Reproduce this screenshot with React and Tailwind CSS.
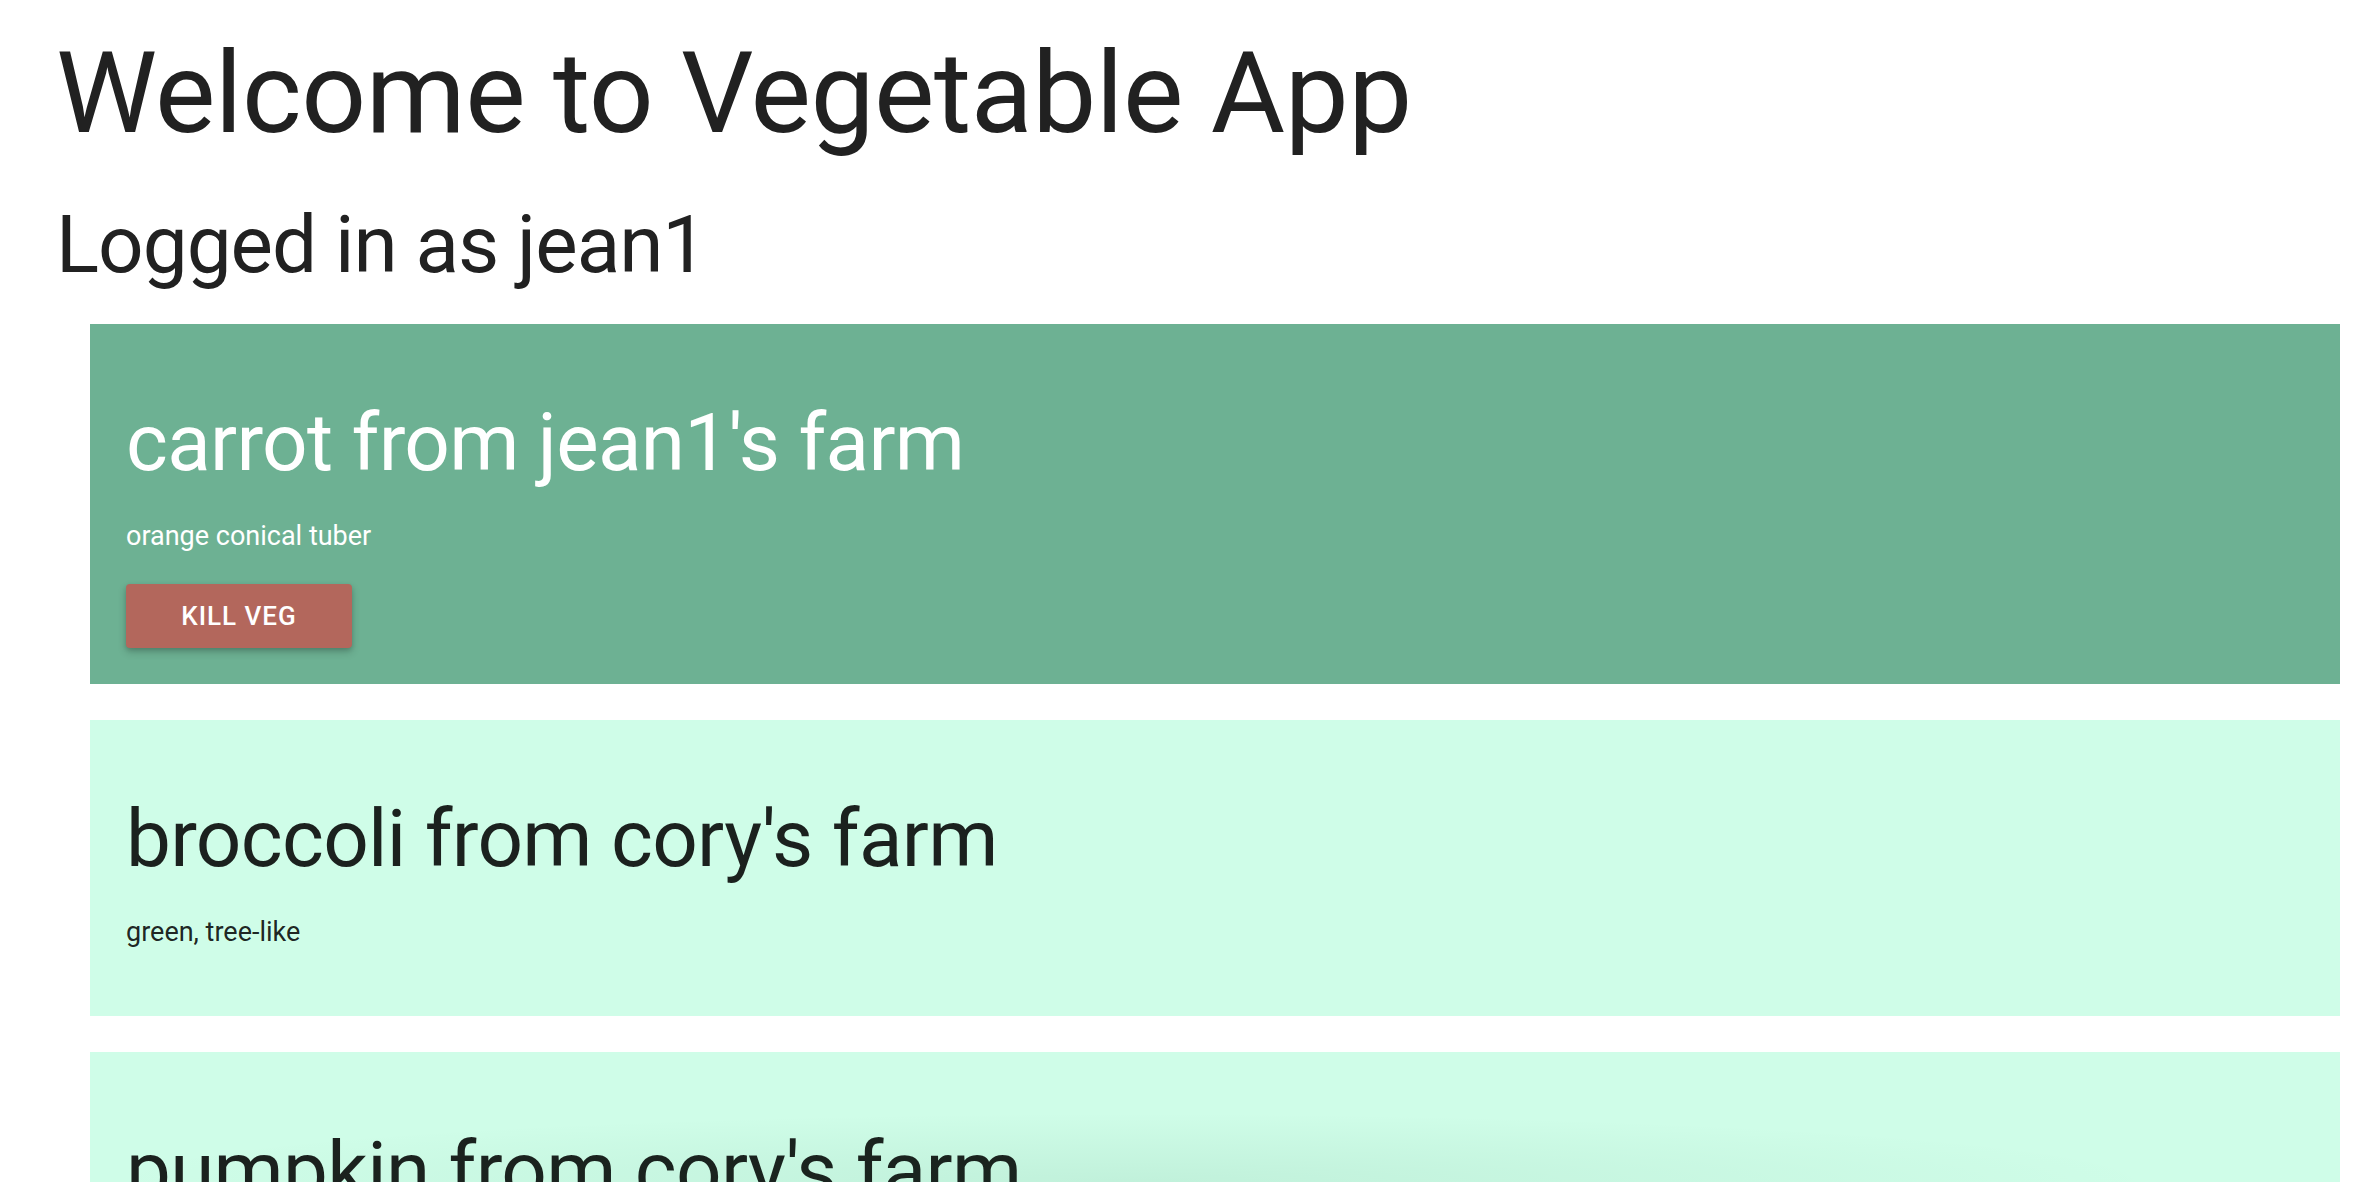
import React from 'react';

const vegetables = [
    { id: 1, name: 'carrot', farmer: 'jean1', description: 'orange conical tuber', mine: true },
    { id: 2, name: 'broccoli', farmer: 'cory', description: 'green, tree-like', mine: false },
    { id: 3, name: 'pumpkin', farmer: 'cory', description: 'big orange gourd', mine: false },
];

function VegCard({ veg }) {
    return (
        <div
            className={`mt-[36px] px-[36px] pt-[79px] pb-[36px] ${
                veg.mine ? 'bg-[#6db193] text-white' : 'bg-[#cffde8] text-[rgba(0,0,0,0.87)]'
            }`}
        >
            <h3 className="text-[80px] leading-none font-normal tracking-[-0.7px]">
                {veg.name} from {veg.farmer}'s farm
            </h3>
            <p className="mt-[40px] mb-[34px] text-[27px] leading-none">{veg.description}</p>
            {veg.mine && (
                <button className="h-[64px] w-[226px] rounded-[4px] bg-[#b3675c] text-[26px] font-medium tracking-[1px] text-white shadow-[0_4px_8px_rgba(0,0,0,0.2),0_2px_4px_rgba(0,0,0,0.12)]">
                    KILL VEG
                </button>
            )}
        </div>
    );
}

export default function App() {
    return (
        <div className="relative h-[1182px] overflow-hidden bg-white font-['Roboto',sans-serif] text-[#212121]">
            <div className="pl-[56px] pr-[24px]">
                <h1 className="pt-[36px] text-[114px] leading-none font-normal tracking-[-0.5px]">
                    Welcome to Vegetable App
                </h1>
                <h2 className="mt-[55px] text-[80px] leading-none font-normal tracking-[-1px]">Logged in as jean1</h2>
                <div className="ml-[34px] pt-[3px]">
                    {vegetables.map((veg) => (
                        <VegCard key={veg.id} veg={veg} />
                    ))}
                </div>
            </div>
            {/* soft shadow along the bottom edge */}
            <div className="pointer-events-none absolute bottom-0 left-[90px] right-[190px] h-[70px] bg-[radial-gradient(ellipse_at_bottom,rgba(0,80,40,0.07),transparent_70%)]" />
        </div>
    );
}
